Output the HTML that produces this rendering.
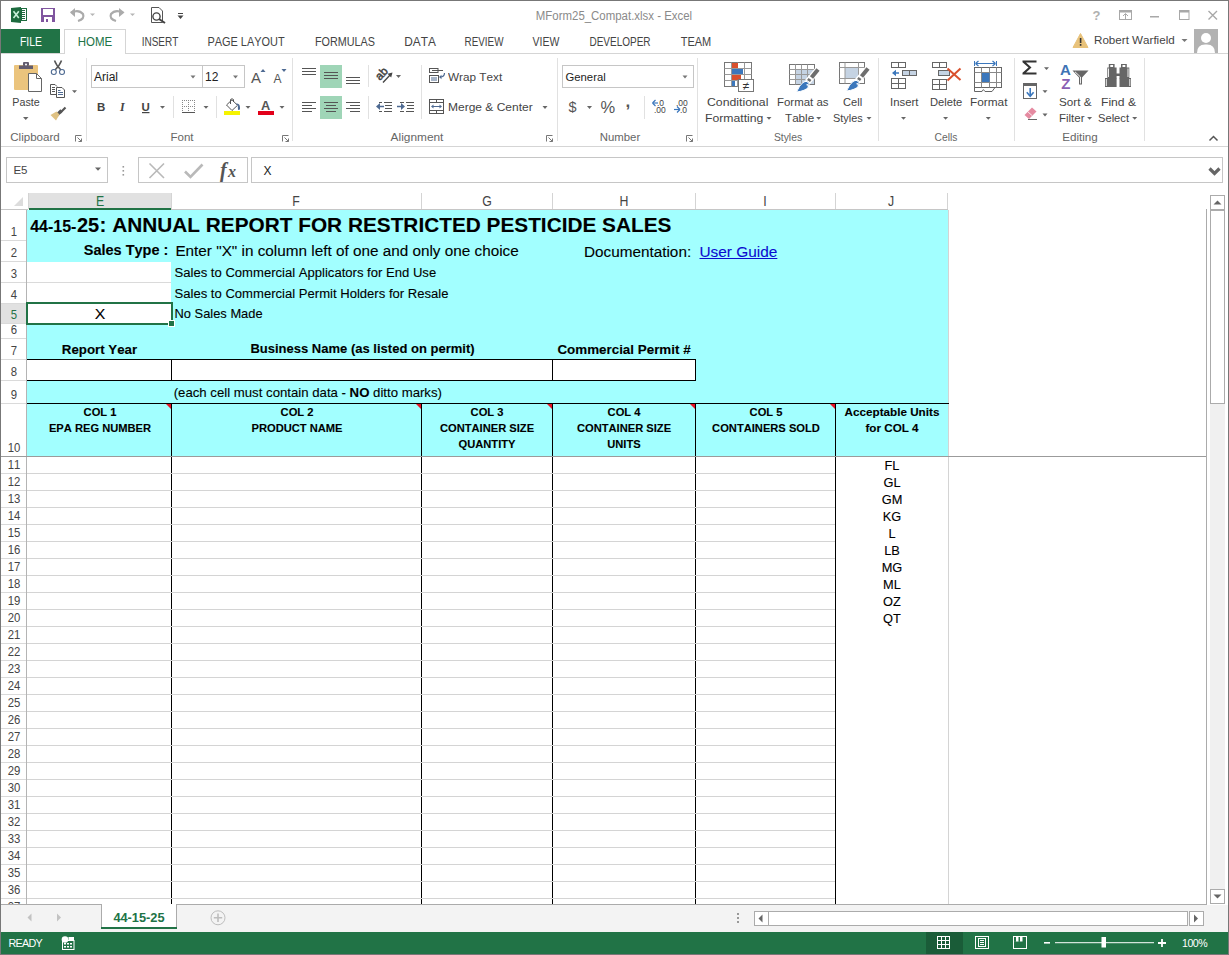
<!DOCTYPE html>
<html><head><meta charset="utf-8"><style>
html,body{margin:0;padding:0;}
body{width:1229px;height:955px;position:relative;overflow:hidden;background:#fff;font-family:"Liberation Sans",sans-serif;}
.t{position:absolute;white-space:nowrap;line-height:1;font-kerning:none;}
.r{position:absolute;}
#frame{position:absolute;left:0;top:0;width:1229px;height:955px;box-sizing:border-box;border:1px solid #777;z-index:100;pointer-events:none;}
</style></head><body>
<div class="t" style="left:213.5px;width:800px;text-align:center;top:10.39px;font-size:12px;color:#8a8a8a;transform:scaleX(0.9528);transform-origin:50% 0;">MForm25_Compat.xlsx - Excel</div>
<div class="r" style="left:1px;top:29px;width:59px;height:25px;background:#217346;"></div>
<div class="t" style="left:-369.5px;width:800px;text-align:center;top:36.05px;font-size:12.4px;color:#fff;transform:scaleX(0.8401);transform-origin:50% 0;">FILE</div>
<div class="r" style="left:64px;top:29px;width:62px;height:25px;background:#fff;border:1px solid #d5d5d5;border-bottom:none;box-sizing:border-box;"></div>
<div class="t" style="left:-305px;width:800px;text-align:center;top:36.05px;font-size:12.4px;color:#217346;transform:scaleX(0.9274);transform-origin:50% 0;">HOME</div>
<div class="t" style="left:-240.25px;width:800px;text-align:center;top:36.05px;font-size:12.4px;color:#444;transform:scaleX(0.8067);transform-origin:50% 0;">INSERT</div>
<div class="t" style="left:-153.8px;width:800px;text-align:center;top:36.05px;font-size:12.4px;color:#444;transform:scaleX(0.8824);transform-origin:50% 0;">PAGE LAYOUT</div>
<div class="t" style="left:-55.44999999999999px;width:800px;text-align:center;top:36.05px;font-size:12.4px;color:#444;transform:scaleX(0.8723);transform-origin:50% 0;">FORMULAS</div>
<div class="t" style="left:19.649999999999977px;width:800px;text-align:center;top:36.05px;font-size:12.4px;color:#444;transform:scaleX(0.9574);transform-origin:50% 0;">DATA</div>
<div class="t" style="left:84.10000000000002px;width:800px;text-align:center;top:36.05px;font-size:12.4px;color:#444;transform:scaleX(0.7973);transform-origin:50% 0;">REVIEW</div>
<div class="t" style="left:146.20000000000005px;width:800px;text-align:center;top:36.05px;font-size:12.4px;color:#444;transform:scaleX(0.8457);transform-origin:50% 0;">VIEW</div>
<div class="t" style="left:220.20000000000005px;width:800px;text-align:center;top:36.05px;font-size:12.4px;color:#444;transform:scaleX(0.8073);transform-origin:50% 0;">DEVELOPER</div>
<div class="t" style="left:295.95000000000005px;width:800px;text-align:center;top:36.05px;font-size:12.4px;color:#444;transform:scaleX(0.8854);transform-origin:50% 0;">TEAM</div>
<div class="r" style="left:1px;top:53px;width:63px;height:1px;background:#d5d5d5;"></div>
<div class="r" style="left:126px;top:53px;width:1102px;height:1px;background:#d5d5d5;"></div>
<div class="r" style="left:1px;top:146px;width:1227px;height:1px;background:#d5d5d5;"></div>
<div class="t" style="left:1093.7px;top:34.96px;font-size:11.8px;color:#444;transform:scaleX(0.9848);transform-origin:0 0;">Robert Warfield</div>
<div class="t" style="left:-364.75px;width:800px;text-align:center;top:132.26px;font-size:11.8px;color:#666;transform:scaleX(0.9800);transform-origin:50% 0;">Clipboard</div>
<div class="t" style="left:-218.05px;width:800px;text-align:center;top:132.26px;font-size:11.8px;color:#666;transform:scaleX(0.9783);transform-origin:50% 0;">Font</div>
<div class="t" style="left:17.399999999999977px;width:800px;text-align:center;top:132.26px;font-size:11.8px;color:#666;transform:scaleX(1.0062);transform-origin:50% 0;">Alignment</div>
<div class="t" style="left:219.75px;width:800px;text-align:center;top:132.26px;font-size:11.8px;color:#666;transform:scaleX(0.9650);transform-origin:50% 0;">Number</div>
<div class="t" style="left:387.6px;width:800px;text-align:center;top:132.26px;font-size:11.8px;color:#666;transform:scaleX(0.8776);transform-origin:50% 0;">Styles</div>
<div class="t" style="left:546.2px;width:800px;text-align:center;top:132.26px;font-size:11.8px;color:#666;transform:scaleX(0.8693);transform-origin:50% 0;">Cells</div>
<div class="t" style="left:679.5px;width:800px;text-align:center;top:132.26px;font-size:11.8px;color:#666;transform:scaleX(0.9867);transform-origin:50% 0;">Editing</div>
<div class="r" style="left:86px;top:58px;width:1px;height:83px;background:#e1e1e1;"></div>
<div class="r" style="left:292px;top:58px;width:1px;height:83px;background:#e1e1e1;"></div>
<div class="r" style="left:557px;top:58px;width:1px;height:83px;background:#e1e1e1;"></div>
<div class="r" style="left:697px;top:58px;width:1px;height:83px;background:#e1e1e1;"></div>
<div class="r" style="left:878px;top:58px;width:1px;height:83px;background:#e1e1e1;"></div>
<div class="r" style="left:1014px;top:58px;width:1px;height:83px;background:#e1e1e1;"></div>
<div class="r" style="left:1144px;top:58px;width:1px;height:83px;background:#e1e1e1;"></div>
<div class="t" style="left:-373.6px;width:800px;text-align:center;top:96.96px;font-size:11.8px;color:#444;transform:scaleX(0.9080);transform-origin:50% 0;">Paste</div>
<div class="t" style="left:448px;top:71.66px;font-size:11.8px;color:#444;transform:scaleX(0.9965);transform-origin:0 0;">Wrap Text</div>
<div class="t" style="left:448px;top:102.26px;font-size:11.8px;color:#444;transform:scaleX(1.0169);transform-origin:0 0;">Merge &amp; Center</div>
<div class="t" style="left:707px;top:97.06px;font-size:11.8px;color:#444;transform:scaleX(1.0399);transform-origin:0 0;">Conditional</div>
<div class="t" style="left:704.6px;top:113.06px;font-size:11.8px;color:#444;transform:scaleX(1.0355);transform-origin:0 0;">Formatting</div>
<div class="t" style="left:776.5px;top:97.06px;font-size:11.8px;color:#444;transform:scaleX(0.9696);transform-origin:0 0;">Format as</div>
<div class="t" style="left:785.4px;top:113.06px;font-size:11.8px;color:#444;transform:scaleX(0.9890);transform-origin:0 0;">Table</div>
<div class="t" style="left:842.6px;top:97.06px;font-size:11.8px;color:#444;transform:scaleX(0.9396);transform-origin:0 0;">Cell</div>
<div class="t" style="left:833px;top:113.06px;font-size:11.8px;color:#444;transform:scaleX(0.9243);transform-origin:0 0;">Styles</div>
<div class="t" style="left:889.6px;top:97.06px;font-size:11.8px;color:#444;transform:scaleX(0.9623);transform-origin:0 0;">Insert</div>
<div class="t" style="left:929.7px;top:97.06px;font-size:11.8px;color:#444;transform:scaleX(0.9469);transform-origin:0 0;">Delete</div>
<div class="t" style="left:969.5px;top:97.06px;font-size:11.8px;color:#444;transform:scaleX(1.0034);transform-origin:0 0;">Format</div>
<div class="t" style="left:1058.5px;top:97.06px;font-size:11.8px;color:#444;transform:scaleX(0.9911);transform-origin:0 0;">Sort &amp;</div>
<div class="t" style="left:1058.5px;top:113.06px;font-size:11.8px;color:#444;transform:scaleX(0.9724);transform-origin:0 0;">Filter</div>
<div class="t" style="left:1100.5px;top:97.06px;font-size:11.8px;color:#444;transform:scaleX(1.0292);transform-origin:0 0;">Find &amp;</div>
<div class="t" style="left:1098px;top:113.06px;font-size:11.8px;color:#444;transform:scaleX(0.9452);transform-origin:0 0;">Select</div>
<div class="r" style="left:6px;top:157px;width:102px;height:26px;background:#fff;border:1px solid #c6c6c6;box-sizing:border-box;"></div>
<div class="t" style="left:13.4px;top:165.32px;font-size:11.5px;color:#444;">E5</div>
<div class="r" style="left:138px;top:157px;width:110px;height:26px;background:#fff;border:1px solid #c6c6c6;box-sizing:border-box;"></div>
<div class="r" style="left:251px;top:157px;width:972px;height:26px;background:#fff;border:1px solid #c6c6c6;box-sizing:border-box;"></div>
<div class="t" style="left:263.6px;top:165.09px;font-size:12px;color:#222;">X</div>
<div class="r" style="left:29px;top:193px;width:142px;height:15px;background:#e1e1e1;"></div>
<div class="r" style="left:29px;top:208px;width:142px;height:2px;background:#217346;"></div>
<div class="r" style="left:0px;top:209px;width:28px;height:1px;background:#c6c6c6;"></div>
<div class="r" style="left:171px;top:209px;width:777px;height:1px;background:#c6c6c6;"></div>
<div class="r" style="left:28px;top:193px;width:1px;height:16px;background:#d4d4d4;"></div>
<div class="r" style="left:171px;top:193px;width:1px;height:16px;background:#d4d4d4;"></div>
<div class="r" style="left:421px;top:193px;width:1px;height:16px;background:#d4d4d4;"></div>
<div class="r" style="left:552px;top:193px;width:1px;height:16px;background:#d4d4d4;"></div>
<div class="r" style="left:695px;top:193px;width:1px;height:16px;background:#d4d4d4;"></div>
<div class="r" style="left:835px;top:193px;width:1px;height:16px;background:#d4d4d4;"></div>
<div class="r" style="left:947px;top:193px;width:1px;height:16px;background:#d4d4d4;"></div>
<div class="t" style="left:-300.5px;width:800px;text-align:center;top:194.40px;font-size:14px;color:#217346;transform:scaleX(0.8800);transform-origin:50% 0;">E</div>
<div class="t" style="left:-104px;width:800px;text-align:center;top:194.40px;font-size:14px;color:#444;transform:scaleX(0.8800);transform-origin:50% 0;">F</div>
<div class="t" style="left:87px;width:800px;text-align:center;top:194.40px;font-size:14px;color:#444;transform:scaleX(0.8800);transform-origin:50% 0;">G</div>
<div class="t" style="left:224px;width:800px;text-align:center;top:194.40px;font-size:14px;color:#444;transform:scaleX(0.8800);transform-origin:50% 0;">H</div>
<div class="t" style="left:365px;width:800px;text-align:center;top:194.40px;font-size:14px;color:#444;transform:scaleX(0.8800);transform-origin:50% 0;">I</div>
<div class="t" style="left:491px;width:800px;text-align:center;top:194.40px;font-size:14px;color:#444;transform:scaleX(0.8800);transform-origin:50% 0;">J</div>
<div class="r" style="left:26px;top:210px;width:1px;height:694px;background:#b4b4b4;"></div>
<div class="r" style="left:1px;top:240px;width:25px;height:1px;background:#dadada;"></div>
<div class="t" style="left:-386px;width:800px;text-align:center;top:225.22px;font-size:13.5px;color:#444;transform:scaleX(0.8400);transform-origin:50% 0;">1</div>
<div class="r" style="left:1px;top:261px;width:25px;height:1px;background:#dadada;"></div>
<div class="t" style="left:-386px;width:800px;text-align:center;top:246.22px;font-size:13.5px;color:#444;transform:scaleX(0.8400);transform-origin:50% 0;">2</div>
<div class="r" style="left:1px;top:282px;width:25px;height:1px;background:#dadada;"></div>
<div class="t" style="left:-386px;width:800px;text-align:center;top:267.22px;font-size:13.5px;color:#444;transform:scaleX(0.8400);transform-origin:50% 0;">3</div>
<div class="r" style="left:1px;top:303px;width:25px;height:1px;background:#dadada;"></div>
<div class="t" style="left:-386px;width:800px;text-align:center;top:288.22px;font-size:13.5px;color:#444;transform:scaleX(0.8400);transform-origin:50% 0;">4</div>
<div class="r" style="left:1px;top:304px;width:25px;height:20px;background:#e1e1e1;"></div>
<div class="r" style="left:1px;top:323px;width:25px;height:1px;background:#dadada;"></div>
<div class="t" style="left:-386px;width:800px;text-align:center;top:308.22px;font-size:13.5px;color:#217346;transform:scaleX(0.8400);transform-origin:50% 0;">5</div>
<div class="r" style="left:1px;top:338px;width:25px;height:1px;background:#dadada;"></div>
<div class="t" style="left:-386px;width:800px;text-align:center;top:323.22px;font-size:13.5px;color:#444;transform:scaleX(0.8400);transform-origin:50% 0;">6</div>
<div class="r" style="left:1px;top:359px;width:25px;height:1px;background:#dadada;"></div>
<div class="t" style="left:-386px;width:800px;text-align:center;top:344.22px;font-size:13.5px;color:#444;transform:scaleX(0.8400);transform-origin:50% 0;">7</div>
<div class="r" style="left:1px;top:380px;width:25px;height:1px;background:#dadada;"></div>
<div class="t" style="left:-386px;width:800px;text-align:center;top:365.22px;font-size:13.5px;color:#444;transform:scaleX(0.8400);transform-origin:50% 0;">8</div>
<div class="r" style="left:1px;top:403px;width:25px;height:1px;background:#dadada;"></div>
<div class="t" style="left:-386px;width:800px;text-align:center;top:388.22px;font-size:13.5px;color:#444;transform:scaleX(0.8400);transform-origin:50% 0;">9</div>
<div class="r" style="left:1px;top:456px;width:25px;height:1px;background:#dadada;"></div>
<div class="t" style="left:-386px;width:800px;text-align:center;top:441.22px;font-size:13.5px;color:#444;transform:scaleX(0.8400);transform-origin:50% 0;">10</div>
<div class="r" style="left:1px;top:473px;width:25px;height:1px;background:#dadada;"></div>
<div class="t" style="left:-386px;width:800px;text-align:center;top:458.22px;font-size:13.5px;color:#444;transform:scaleX(0.8400);transform-origin:50% 0;">11</div>
<div class="r" style="left:1px;top:490px;width:25px;height:1px;background:#dadada;"></div>
<div class="t" style="left:-386px;width:800px;text-align:center;top:475.22px;font-size:13.5px;color:#444;transform:scaleX(0.8400);transform-origin:50% 0;">12</div>
<div class="r" style="left:1px;top:507px;width:25px;height:1px;background:#dadada;"></div>
<div class="t" style="left:-386px;width:800px;text-align:center;top:492.22px;font-size:13.5px;color:#444;transform:scaleX(0.8400);transform-origin:50% 0;">13</div>
<div class="r" style="left:1px;top:524px;width:25px;height:1px;background:#dadada;"></div>
<div class="t" style="left:-386px;width:800px;text-align:center;top:509.22px;font-size:13.5px;color:#444;transform:scaleX(0.8400);transform-origin:50% 0;">14</div>
<div class="r" style="left:1px;top:541px;width:25px;height:1px;background:#dadada;"></div>
<div class="t" style="left:-386px;width:800px;text-align:center;top:526.22px;font-size:13.5px;color:#444;transform:scaleX(0.8400);transform-origin:50% 0;">15</div>
<div class="r" style="left:1px;top:558px;width:25px;height:1px;background:#dadada;"></div>
<div class="t" style="left:-386px;width:800px;text-align:center;top:543.22px;font-size:13.5px;color:#444;transform:scaleX(0.8400);transform-origin:50% 0;">16</div>
<div class="r" style="left:1px;top:575px;width:25px;height:1px;background:#dadada;"></div>
<div class="t" style="left:-386px;width:800px;text-align:center;top:560.22px;font-size:13.5px;color:#444;transform:scaleX(0.8400);transform-origin:50% 0;">17</div>
<div class="r" style="left:1px;top:592px;width:25px;height:1px;background:#dadada;"></div>
<div class="t" style="left:-386px;width:800px;text-align:center;top:577.22px;font-size:13.5px;color:#444;transform:scaleX(0.8400);transform-origin:50% 0;">18</div>
<div class="r" style="left:1px;top:609px;width:25px;height:1px;background:#dadada;"></div>
<div class="t" style="left:-386px;width:800px;text-align:center;top:594.22px;font-size:13.5px;color:#444;transform:scaleX(0.8400);transform-origin:50% 0;">19</div>
<div class="r" style="left:1px;top:626px;width:25px;height:1px;background:#dadada;"></div>
<div class="t" style="left:-386px;width:800px;text-align:center;top:611.22px;font-size:13.5px;color:#444;transform:scaleX(0.8400);transform-origin:50% 0;">20</div>
<div class="r" style="left:1px;top:643px;width:25px;height:1px;background:#dadada;"></div>
<div class="t" style="left:-386px;width:800px;text-align:center;top:628.22px;font-size:13.5px;color:#444;transform:scaleX(0.8400);transform-origin:50% 0;">21</div>
<div class="r" style="left:1px;top:660px;width:25px;height:1px;background:#dadada;"></div>
<div class="t" style="left:-386px;width:800px;text-align:center;top:645.22px;font-size:13.5px;color:#444;transform:scaleX(0.8400);transform-origin:50% 0;">22</div>
<div class="r" style="left:1px;top:677px;width:25px;height:1px;background:#dadada;"></div>
<div class="t" style="left:-386px;width:800px;text-align:center;top:662.22px;font-size:13.5px;color:#444;transform:scaleX(0.8400);transform-origin:50% 0;">23</div>
<div class="r" style="left:1px;top:694px;width:25px;height:1px;background:#dadada;"></div>
<div class="t" style="left:-386px;width:800px;text-align:center;top:679.22px;font-size:13.5px;color:#444;transform:scaleX(0.8400);transform-origin:50% 0;">24</div>
<div class="r" style="left:1px;top:711px;width:25px;height:1px;background:#dadada;"></div>
<div class="t" style="left:-386px;width:800px;text-align:center;top:696.22px;font-size:13.5px;color:#444;transform:scaleX(0.8400);transform-origin:50% 0;">25</div>
<div class="r" style="left:1px;top:728px;width:25px;height:1px;background:#dadada;"></div>
<div class="t" style="left:-386px;width:800px;text-align:center;top:713.22px;font-size:13.5px;color:#444;transform:scaleX(0.8400);transform-origin:50% 0;">26</div>
<div class="r" style="left:1px;top:745px;width:25px;height:1px;background:#dadada;"></div>
<div class="t" style="left:-386px;width:800px;text-align:center;top:730.22px;font-size:13.5px;color:#444;transform:scaleX(0.8400);transform-origin:50% 0;">27</div>
<div class="r" style="left:1px;top:762px;width:25px;height:1px;background:#dadada;"></div>
<div class="t" style="left:-386px;width:800px;text-align:center;top:747.22px;font-size:13.5px;color:#444;transform:scaleX(0.8400);transform-origin:50% 0;">28</div>
<div class="r" style="left:1px;top:779px;width:25px;height:1px;background:#dadada;"></div>
<div class="t" style="left:-386px;width:800px;text-align:center;top:764.22px;font-size:13.5px;color:#444;transform:scaleX(0.8400);transform-origin:50% 0;">29</div>
<div class="r" style="left:1px;top:796px;width:25px;height:1px;background:#dadada;"></div>
<div class="t" style="left:-386px;width:800px;text-align:center;top:781.22px;font-size:13.5px;color:#444;transform:scaleX(0.8400);transform-origin:50% 0;">30</div>
<div class="r" style="left:1px;top:813px;width:25px;height:1px;background:#dadada;"></div>
<div class="t" style="left:-386px;width:800px;text-align:center;top:798.22px;font-size:13.5px;color:#444;transform:scaleX(0.8400);transform-origin:50% 0;">31</div>
<div class="r" style="left:1px;top:830px;width:25px;height:1px;background:#dadada;"></div>
<div class="t" style="left:-386px;width:800px;text-align:center;top:815.22px;font-size:13.5px;color:#444;transform:scaleX(0.8400);transform-origin:50% 0;">32</div>
<div class="r" style="left:1px;top:847px;width:25px;height:1px;background:#dadada;"></div>
<div class="t" style="left:-386px;width:800px;text-align:center;top:832.22px;font-size:13.5px;color:#444;transform:scaleX(0.8400);transform-origin:50% 0;">33</div>
<div class="r" style="left:1px;top:864px;width:25px;height:1px;background:#dadada;"></div>
<div class="t" style="left:-386px;width:800px;text-align:center;top:849.22px;font-size:13.5px;color:#444;transform:scaleX(0.8400);transform-origin:50% 0;">34</div>
<div class="r" style="left:1px;top:881px;width:25px;height:1px;background:#dadada;"></div>
<div class="t" style="left:-386px;width:800px;text-align:center;top:866.22px;font-size:13.5px;color:#444;transform:scaleX(0.8400);transform-origin:50% 0;">35</div>
<div class="r" style="left:1px;top:898px;width:25px;height:1px;background:#dadada;"></div>
<div class="t" style="left:-386px;width:800px;text-align:center;top:883.22px;font-size:13.5px;color:#444;transform:scaleX(0.8400);transform-origin:50% 0;">36</div>
<div class="r" style="left:1px;top:915px;width:25px;height:1px;background:#dadada;"></div>
<div class="t" style="left:-386px;width:800px;text-align:center;top:900.22px;font-size:13.5px;color:#444;transform:scaleX(0.8400);transform-origin:50% 0;">37</div>
<div class="r" style="left:27px;top:210px;width:921px;height:246px;background:#a2ffff;"></div>
<div class="r" style="left:27px;top:262px;width:144px;height:62px;background:#fff;"></div>
<div class="r" style="left:27px;top:282px;width:144px;height:1px;background:#dadada;"></div>
<div class="r" style="left:27px;top:360px;width:668px;height:20px;background:#fff;"></div>
<div class="r" style="left:948px;top:210px;width:1px;height:694px;background:#d4d4d4;"></div>
<div class="r" style="left:27px;top:359px;width:669px;height:1px;background:#000;"></div>
<div class="r" style="left:27px;top:380px;width:669px;height:1px;background:#000;"></div>
<div class="r" style="left:171px;top:359px;width:1px;height:22px;background:#000;"></div>
<div class="r" style="left:552px;top:359px;width:1px;height:22px;background:#000;"></div>
<div class="r" style="left:695px;top:359px;width:1px;height:22px;background:#000;"></div>
<div class="r" style="left:27px;top:403px;width:922px;height:1px;background:#000;"></div>
<div class="r" style="left:171px;top:403px;width:1px;height:501px;background:#000;"></div>
<div class="r" style="left:421px;top:403px;width:1px;height:501px;background:#000;"></div>
<div class="r" style="left:552px;top:403px;width:1px;height:501px;background:#000;"></div>
<div class="r" style="left:695px;top:403px;width:1px;height:501px;background:#000;"></div>
<div class="r" style="left:835px;top:403px;width:1px;height:501px;background:#000;"></div>
<div class="r" style="left:1px;top:456px;width:1206px;height:1px;background:#9b9b9b;"></div>
<div class="r" style="left:27px;top:473px;width:808px;height:1px;background:#d4d4d4;"></div>
<div class="r" style="left:27px;top:490px;width:808px;height:1px;background:#d4d4d4;"></div>
<div class="r" style="left:27px;top:507px;width:808px;height:1px;background:#d4d4d4;"></div>
<div class="r" style="left:27px;top:524px;width:808px;height:1px;background:#d4d4d4;"></div>
<div class="r" style="left:27px;top:541px;width:808px;height:1px;background:#d4d4d4;"></div>
<div class="r" style="left:27px;top:558px;width:808px;height:1px;background:#d4d4d4;"></div>
<div class="r" style="left:27px;top:575px;width:808px;height:1px;background:#d4d4d4;"></div>
<div class="r" style="left:27px;top:592px;width:808px;height:1px;background:#d4d4d4;"></div>
<div class="r" style="left:27px;top:609px;width:808px;height:1px;background:#d4d4d4;"></div>
<div class="r" style="left:27px;top:626px;width:808px;height:1px;background:#d4d4d4;"></div>
<div class="r" style="left:27px;top:643px;width:808px;height:1px;background:#d4d4d4;"></div>
<div class="r" style="left:27px;top:660px;width:808px;height:1px;background:#d4d4d4;"></div>
<div class="r" style="left:27px;top:677px;width:808px;height:1px;background:#d4d4d4;"></div>
<div class="r" style="left:27px;top:694px;width:808px;height:1px;background:#d4d4d4;"></div>
<div class="r" style="left:27px;top:711px;width:808px;height:1px;background:#d4d4d4;"></div>
<div class="r" style="left:27px;top:728px;width:808px;height:1px;background:#d4d4d4;"></div>
<div class="r" style="left:27px;top:745px;width:808px;height:1px;background:#d4d4d4;"></div>
<div class="r" style="left:27px;top:762px;width:808px;height:1px;background:#d4d4d4;"></div>
<div class="r" style="left:27px;top:779px;width:808px;height:1px;background:#d4d4d4;"></div>
<div class="r" style="left:27px;top:796px;width:808px;height:1px;background:#d4d4d4;"></div>
<div class="r" style="left:27px;top:813px;width:808px;height:1px;background:#d4d4d4;"></div>
<div class="r" style="left:27px;top:830px;width:808px;height:1px;background:#d4d4d4;"></div>
<div class="r" style="left:27px;top:847px;width:808px;height:1px;background:#d4d4d4;"></div>
<div class="r" style="left:27px;top:864px;width:808px;height:1px;background:#d4d4d4;"></div>
<div class="r" style="left:27px;top:881px;width:808px;height:1px;background:#d4d4d4;"></div>
<div class="r" style="left:27px;top:898px;width:808px;height:1px;background:#d4d4d4;"></div>
<svg class="r" style="left:166px;top:404px;" width="5" height="5" viewBox="0 0 5 5"><polygon points="0,0 5,0 5,5" fill="#e81123"/></svg>
<svg class="r" style="left:416px;top:404px;" width="5" height="5" viewBox="0 0 5 5"><polygon points="0,0 5,0 5,5" fill="#e81123"/></svg>
<svg class="r" style="left:547px;top:404px;" width="5" height="5" viewBox="0 0 5 5"><polygon points="0,0 5,0 5,5" fill="#e81123"/></svg>
<svg class="r" style="left:690px;top:404px;" width="5" height="5" viewBox="0 0 5 5"><polygon points="0,0 5,0 5,5" fill="#e81123"/></svg>
<svg class="r" style="left:830px;top:404px;" width="5" height="5" viewBox="0 0 5 5"><polygon points="0,0 5,0 5,5" fill="#e81123"/></svg>
<div class="r" style="left:26px;top:302px;width:147px;height:23px;background:transparent;border:2px solid #217346;box-sizing:border-box;"></div>
<div class="r" style="left:169px;top:321px;width:5px;height:5px;background:#217346;outline:1px solid #fff;"></div>
<div class="t" style="left:30.2px;top:218.71px;font-size:16px;font-weight:bold;color:#000;-webkit-text-stroke:0.1px #000;">44-15-</div>
<div class="t" style="left:77px;top:215.32px;font-size:20px;font-weight:bold;color:#000;-webkit-text-stroke:0.1px #000;">25</div>
<div class="t" style="left:99.5px;top:214.64px;font-size:20.8px;font-weight:bold;color:#000;-webkit-text-stroke:0.1px #000;">: ANNUAL REPORT FOR RESTRICTED PESTICIDE SALES</div>
<div class="t" style="right:1060.6px;text-align:right;top:243.28px;font-size:14.5px;font-weight:bold;color:#000;-webkit-text-stroke:0.1px #000;">Sales Type :</div>
<div class="t" style="left:175.4px;top:242.80px;font-size:15.3px;color:#000;-webkit-text-stroke:0.1px #000;">Enter "X" in column left of one and only one choice</div>
<div class="t" style="left:584px;top:244.30px;font-size:15.3px;color:#000;-webkit-text-stroke:0.1px #000;">Documentation:</div>
<div class="t" style="left:699.5px;top:244.21px;font-size:15.4px;color:#0b0bd0;-webkit-text-stroke:0.1px #0b0bd0;"><u>User Guide</u></div>
<div class="t" style="left:174.5px;top:266.18px;font-size:13.08px;color:#000;-webkit-text-stroke:0.1px #000;">Sales to Commercial Applicators for End Use</div>
<div class="t" style="left:174.5px;top:287.18px;font-size:13.08px;color:#000;-webkit-text-stroke:0.1px #000;">Sales to Commercial Permit Holders for Resale</div>
<div class="t" style="left:174.5px;top:307.93px;font-size:12.9px;color:#000;-webkit-text-stroke:0.1px #000;">No Sales Made</div>
<div class="t" style="left:-300.4px;width:800px;text-align:center;top:307.32px;font-size:14.8px;color:#000;transform:scaleX(1.0700);transform-origin:50% 0;-webkit-text-stroke:0.1px #000;">X</div>
<div class="t" style="left:-300.5px;width:800px;text-align:center;top:343.19px;font-size:13.3px;font-weight:bold;color:#000;-webkit-text-stroke:0.1px #000;">Report Year</div>
<div class="t" style="left:-37.5px;width:800px;text-align:center;top:342.32px;font-size:13.03px;font-weight:bold;color:#000;-webkit-text-stroke:0.1px #000;">Business Name (as listed on permit)</div>
<div class="t" style="left:224px;width:800px;text-align:center;top:342.81px;font-size:13.4px;font-weight:bold;color:#000;-webkit-text-stroke:0.1px #000;">Commercial Permit #</div>
<div class="t" style="left:173.7px;top:385.68px;font-size:13.2px;color:#000;-webkit-text-stroke:0.1px #000;">(each cell must contain data - <b>NO</b> ditto marks)</div>
<div class="t" style="left:-300.5px;width:800px;text-align:center;top:406.96px;font-size:11.8px;font-weight:bold;color:#000;transform:scaleX(0.9450);transform-origin:50% 0;-webkit-text-stroke:0.1px #000;">COL 1</div>
<div class="t" style="left:-300.5px;width:800px;text-align:center;top:422.96px;font-size:11.8px;font-weight:bold;color:#000;transform:scaleX(0.9450);transform-origin:50% 0;-webkit-text-stroke:0.1px #000;">EPA REG NUMBER</div>
<div class="t" style="left:-103.5px;width:800px;text-align:center;top:406.96px;font-size:11.8px;font-weight:bold;color:#000;transform:scaleX(0.9450);transform-origin:50% 0;-webkit-text-stroke:0.1px #000;">COL 2</div>
<div class="t" style="left:-103.5px;width:800px;text-align:center;top:422.96px;font-size:11.8px;font-weight:bold;color:#000;transform:scaleX(0.9450);transform-origin:50% 0;-webkit-text-stroke:0.1px #000;">PRODUCT NAME</div>
<div class="t" style="left:87px;width:800px;text-align:center;top:406.96px;font-size:11.8px;font-weight:bold;color:#000;transform:scaleX(0.9450);transform-origin:50% 0;-webkit-text-stroke:0.1px #000;">COL 3</div>
<div class="t" style="left:87px;width:800px;text-align:center;top:422.96px;font-size:11.8px;font-weight:bold;color:#000;transform:scaleX(0.9450);transform-origin:50% 0;-webkit-text-stroke:0.1px #000;">CONTAINER SIZE</div>
<div class="t" style="left:87px;width:800px;text-align:center;top:438.96px;font-size:11.8px;font-weight:bold;color:#000;transform:scaleX(0.9450);transform-origin:50% 0;-webkit-text-stroke:0.1px #000;">QUANTITY</div>
<div class="t" style="left:224px;width:800px;text-align:center;top:406.96px;font-size:11.8px;font-weight:bold;color:#000;transform:scaleX(0.9450);transform-origin:50% 0;-webkit-text-stroke:0.1px #000;">COL 4</div>
<div class="t" style="left:224px;width:800px;text-align:center;top:422.96px;font-size:11.8px;font-weight:bold;color:#000;transform:scaleX(0.9450);transform-origin:50% 0;-webkit-text-stroke:0.1px #000;">CONTAINER SIZE</div>
<div class="t" style="left:224px;width:800px;text-align:center;top:438.96px;font-size:11.8px;font-weight:bold;color:#000;transform:scaleX(0.9450);transform-origin:50% 0;-webkit-text-stroke:0.1px #000;">UNITS</div>
<div class="t" style="left:365.5px;width:800px;text-align:center;top:406.96px;font-size:11.8px;font-weight:bold;color:#000;transform:scaleX(0.9450);transform-origin:50% 0;-webkit-text-stroke:0.1px #000;">COL 5</div>
<div class="t" style="left:365.5px;width:800px;text-align:center;top:422.96px;font-size:11.8px;font-weight:bold;color:#000;transform:scaleX(0.9450);transform-origin:50% 0;-webkit-text-stroke:0.1px #000;">CONTAINERS SOLD</div>
<div class="t" style="left:491.5px;width:800px;text-align:center;top:406.96px;font-size:11.8px;font-weight:bold;color:#000;transform:scaleX(0.9900);transform-origin:50% 0;-webkit-text-stroke:0.1px #000;">Acceptable Units</div>
<div class="t" style="left:491.5px;width:800px;text-align:center;top:422.96px;font-size:11.8px;font-weight:bold;color:#000;transform:scaleX(0.9900);transform-origin:50% 0;-webkit-text-stroke:0.1px #000;">for COL 4</div>
<div class="t" style="left:492px;width:800px;text-align:center;top:460.11px;font-size:12.8px;color:#000;-webkit-text-stroke:0.1px #000;">FL</div>
<div class="t" style="left:492px;width:800px;text-align:center;top:477.11px;font-size:12.8px;color:#000;-webkit-text-stroke:0.1px #000;">GL</div>
<div class="t" style="left:492px;width:800px;text-align:center;top:494.11px;font-size:12.8px;color:#000;-webkit-text-stroke:0.1px #000;">GM</div>
<div class="t" style="left:492px;width:800px;text-align:center;top:511.11px;font-size:12.8px;color:#000;-webkit-text-stroke:0.1px #000;">KG</div>
<div class="t" style="left:492px;width:800px;text-align:center;top:528.11px;font-size:12.8px;color:#000;-webkit-text-stroke:0.1px #000;">L</div>
<div class="t" style="left:492px;width:800px;text-align:center;top:545.11px;font-size:12.8px;color:#000;-webkit-text-stroke:0.1px #000;">LB</div>
<div class="t" style="left:492px;width:800px;text-align:center;top:562.11px;font-size:12.8px;color:#000;-webkit-text-stroke:0.1px #000;">MG</div>
<div class="t" style="left:492px;width:800px;text-align:center;top:579.11px;font-size:12.8px;color:#000;-webkit-text-stroke:0.1px #000;">ML</div>
<div class="t" style="left:492px;width:800px;text-align:center;top:596.11px;font-size:12.8px;color:#000;-webkit-text-stroke:0.1px #000;">OZ</div>
<div class="t" style="left:492px;width:800px;text-align:center;top:613.11px;font-size:12.8px;color:#000;-webkit-text-stroke:0.1px #000;">QT</div>
<div class="r" style="left:1210px;top:404px;width:15px;height:485px;background:#f0f0f0;"></div>
<div class="r" style="left:1206px;top:209px;width:1px;height:695px;background:#ababab;"></div>
<div class="r" style="left:1210px;top:195px;width:15px;height:15px;background:#fff;border:1px solid #ababab;box-sizing:border-box;"></div>
<div class="r" style="left:1210px;top:210px;width:15px;height:194px;background:#fff;border:1px solid #ababab;box-sizing:border-box;"></div>
<div class="r" style="left:1210px;top:889px;width:15px;height:15px;background:#fff;border:1px solid #ababab;box-sizing:border-box;"></div>
<div class="r" style="left:1px;top:904px;width:1206px;height:1px;background:#ababab;"></div>
<div class="r" style="left:1px;top:905px;width:1227px;height:27px;background:#f3f3f3;"></div>
<div class="r" style="left:101px;top:904px;width:76px;height:25px;background:#fff;border-left:1px solid #ababab;border-right:1px solid #ababab;box-sizing:border-box;"></div>
<div class="r" style="left:101px;top:927px;width:76px;height:2px;background:#217346;"></div>
<div class="t" style="left:-261px;width:800px;text-align:center;top:911.51px;font-size:12.8px;font-weight:bold;color:#217346;">44-15-25</div>
<div class="r" style="left:754px;top:911px;width:15px;height:15px;background:#fff;border:1px solid #ababab;box-sizing:border-box;"></div>
<div class="r" style="left:768px;top:911px;width:420px;height:15px;background:#fff;border:1px solid #ababab;box-sizing:border-box;"></div>
<div class="r" style="left:1189px;top:911px;width:15px;height:15px;background:#fff;border:1px solid #ababab;box-sizing:border-box;"></div>
<div class="r" style="left:1px;top:932px;width:1227px;height:22px;background:#217346;"></div>
<div class="r" style="left:926px;top:932px;width:37px;height:22px;background:#1a5c38;"></div>
<div class="t" style="left:8.5px;top:937.91px;font-size:10.8px;color:#fff;letter-spacing:-0.75px;">READY</div>
<div class="t" style="left:1181.9px;top:938.28px;font-size:10.6px;color:#fff;letter-spacing:-0.4px;">100%</div><svg class="r" style="left:0;top:0;z-index:50" width="1229" height="955"><path d="M11,8 L21,7 L21,23 L11,22 Z" fill="#1d6b3e"/><rect x="21.5" y="8.5" width="5" height="12" fill="#fff" stroke="#1d6b3e" stroke-width="1"/><rect x="22" y="10" width="3" height="1" fill="#1d6b3e"/><rect x="22" y="12" width="3" height="1" fill="#1d6b3e"/><rect x="22" y="14" width="3" height="1" fill="#1d6b3e"/><rect x="22" y="16" width="3" height="1" fill="#1d6b3e"/><rect x="22" y="18" width="3" height="1" fill="#1d6b3e"/><path d="M13.5,11.3 L18.8,18.1 M18.8,11.3 L13.5,18.1" stroke="#c9f1d9" stroke-width="1.6"/><rect x="41" y="8" width="14" height="14" fill="#80559f"/><rect x="43" y="9" width="10" height="6" fill="#fff"/><rect x="44" y="17" width="8" height="5" fill="#fff"/><rect x="46" y="19" width="2" height="3" fill="#80559f"/><path d="M71,12.5 Q79,9 83,14 Q85,19 78,21" fill="none" stroke="#ababab" stroke-width="2.2"/><path d="M70,12.5 L75,8 L75,17 Z" fill="#ababab"/><path d="M90,13.5 L95,13.5 L92.5,16 Z" fill="#b5b5b5"/><path d="M123,12.5 Q115,9 111,14 Q109,19 116,21" fill="none" stroke="#ababab" stroke-width="2.2"/><path d="M124.5,12.5 L119,8 L119,17 Z" fill="#ababab"/><path d="M130,13.5 L135,13.5 L132.5,16 Z" fill="#b5b5b5"/><path d="M151.5,7.5 L159,7.5 L162.5,11 L162.5,22.5 L151.5,22.5 Z" fill="#fff" stroke="#555" stroke-width="1"/><circle cx="156.5" cy="16.5" r="3.6" fill="none" stroke="#444" stroke-width="1.4"/><path d="M159,19 L165,23" stroke="#444" stroke-width="2"/><rect x="178" y="13" width="5" height="1" fill="#444"/><path d="M177.5,15.5 L183.5,15.5 L180.5,19 Z" fill="#444"/><text x="1096.5" y="20" font-family="Liberation Sans" font-size="13" font-weight="bold" fill="#b0b0b0" text-anchor="middle">?</text><rect x="1119.5" y="10.5" width="12" height="9" fill="none" stroke="#a8a8a8" stroke-width="1"/><rect x="1119.5" y="10.5" width="12" height="2" fill="#a8a8a8"/><path d="M1125.5,19 L1125.5,14 M1123,16 L1125.5,13.5 L1128,16" fill="none" stroke="#a8a8a8" stroke-width="1"/><rect x="1150" y="16" width="9" height="1.5" fill="#a8a8a8"/><rect x="1179.5" y="10.5" width="9.5" height="9" fill="none" stroke="#a8a8a8" stroke-width="1"/><rect x="1179.5" y="10.5" width="9.5" height="2" fill="#a8a8a8"/><path d="M1208.5,11 L1217,19.5 M1217,11 L1208.5,19.5" stroke="#a8a8a8" stroke-width="1.4"/><path d="M1080.5,33.5 L1088,47.5 L1073,47.5 Z" fill="#e8c27a" stroke="#e8c27a" stroke-width="1" stroke-linejoin="round"/><rect x="1079.8" y="38" width="1.6" height="5" fill="#333"/><rect x="1079.8" y="44" width="1.6" height="1.8" fill="#333"/><path d="M1181.5,39 L1187.5,39 L1184.5,42 Z" fill="#777"/><rect x="1194" y="29" width="24" height="24" fill="#b2b2b2"/><circle cx="1206" cy="38" r="5" fill="#fff"/><path d="M1197,53 Q1197,44 1206,44.5 Q1215,44 1215,53 Z" fill="#fff"/><rect x="14" y="65" width="24" height="25" rx="1" fill="#ebc47d"/><rect x="19" y="65.5" width="14" height="3.5" fill="#625c6e"/><rect x="23" y="62" width="6" height="4" rx="1" fill="#625c6e"/><circle cx="26" cy="64.5" r="1" fill="#fff"/><path d="M28.5,73.5 L36.5,73.5 L41.5,78.5 L41.5,91.5 L28.5,91.5 Z" fill="#fff" stroke="#666" stroke-width="1"/><path d="M36.5,73.5 L36.5,78.5 L41.5,78.5" fill="none" stroke="#666" stroke-width="1"/><path d="M23,117 L28.5,117 L25.75,120 Z" fill="#666"/><path d="M54.5,60.5 Q56,65 61,70 M61.5,60.5 Q60,65 55,70" fill="none" stroke="#555" stroke-width="1.5"/><circle cx="53.8" cy="72" r="2.5" fill="none" stroke="#4e6a92" stroke-width="1.1"/><circle cx="62" cy="72" r="2.5" fill="none" stroke="#4e6a92" stroke-width="1.1"/><path d="M50.5,84.5 L55,84.5 L57,86.5 M50.5,84.5 L50.5,94.5 L56.5,94.5" fill="none" stroke="#555" stroke-width="1"/><rect x="52" y="87" width="3" height="1" fill="#555"/><rect x="52" y="89" width="3" height="1" fill="#555"/><rect x="52" y="91" width="3" height="1" fill="#555"/><path d="M56.5,87.5 L62,87.5 L64.5,90 L64.5,97.5 L56.5,97.5 Z" fill="#fff" stroke="#555" stroke-width="1"/><rect x="58" y="90" width="2.5" height="1" fill="#4e6a92"/><rect x="58" y="92" width="5" height="1" fill="#4e6a92"/><rect x="58" y="94" width="5" height="1" fill="#4e6a92"/><path d="M72,90.3 L77,90.3 L74.5,93 Z" fill="#666"/><path d="M65.5,107.5 L60,113" stroke="#555" stroke-width="2.2"/><path d="M61.5,110.5 L56,116" stroke="#555" stroke-width="3.2"/><path d="M56.5,111.5 L50.5,115 L56,120.5 L59.5,114.5 Z" fill="#e0c283"/><rect x="91.5" y="65.5" width="111" height="22" fill="#fff" stroke="#c6c6c6"/><rect x="202.5" y="65.5" width="42" height="22" fill="#fff" stroke="#c6c6c6"/><text x="94" y="81" font-family="Liberation Sans" font-size="12" fill="#222">Arial</text><text x="205" y="81" font-family="Liberation Sans" font-size="12" fill="#222">12</text><path d="M190.5,75.5 L195.5,75.5 L193,78.5 Z" fill="#777"/><path d="M233,75.5 L238,75.5 L235.5,78.5 Z" fill="#777"/><text x="251" y="83" font-family="Liberation Sans" font-size="15" fill="#555">A</text><path d="M260.5,72 L265.5,72 L263,69 Z" fill="#4e6a92"/><text x="273.5" y="83" font-family="Liberation Sans" font-size="12" fill="#555">A</text><path d="M281.5,69 L286.5,69 L284,72 Z" fill="#4e6a92"/><text x="97" y="110.6" font-family="Liberation Sans" font-size="11.5" font-weight="bold" fill="#444">B</text><text x="120" y="110.6" font-family="Liberation Serif" font-size="12" font-style="italic" font-weight="bold" fill="#444">I</text><text x="141.5" y="110.6" font-family="Liberation Sans" font-size="11.5" font-weight="bold" fill="#444">U</text><rect x="142" y="112" width="7.5" height="1.2" fill="#444"/><path d="M160,106 L165,106 L162.5,108.8 Z" fill="#666"/><rect x="173" y="96" width="1" height="22" fill="#e1e1e1"/><rect x="182" y="100" width="1" height="1" fill="#888"/><rect x="182" y="106" width="1" height="1" fill="#888"/><rect x="182" y="100" width="1" height="1" fill="#888"/><rect x="188" y="100" width="1" height="1" fill="#888"/><rect x="194" y="100" width="1" height="1" fill="#888"/><rect x="184" y="100" width="1" height="1" fill="#888"/><rect x="184" y="106" width="1" height="1" fill="#888"/><rect x="182" y="102" width="1" height="1" fill="#888"/><rect x="188" y="102" width="1" height="1" fill="#888"/><rect x="194" y="102" width="1" height="1" fill="#888"/><rect x="186" y="100" width="1" height="1" fill="#888"/><rect x="186" y="106" width="1" height="1" fill="#888"/><rect x="182" y="104" width="1" height="1" fill="#888"/><rect x="188" y="104" width="1" height="1" fill="#888"/><rect x="194" y="104" width="1" height="1" fill="#888"/><rect x="188" y="100" width="1" height="1" fill="#888"/><rect x="188" y="106" width="1" height="1" fill="#888"/><rect x="182" y="106" width="1" height="1" fill="#888"/><rect x="188" y="106" width="1" height="1" fill="#888"/><rect x="194" y="106" width="1" height="1" fill="#888"/><rect x="190" y="100" width="1" height="1" fill="#888"/><rect x="190" y="106" width="1" height="1" fill="#888"/><rect x="182" y="108" width="1" height="1" fill="#888"/><rect x="188" y="108" width="1" height="1" fill="#888"/><rect x="194" y="108" width="1" height="1" fill="#888"/><rect x="192" y="100" width="1" height="1" fill="#888"/><rect x="192" y="106" width="1" height="1" fill="#888"/><rect x="182" y="110" width="1" height="1" fill="#888"/><rect x="188" y="110" width="1" height="1" fill="#888"/><rect x="194" y="110" width="1" height="1" fill="#888"/><rect x="194" y="100" width="1" height="1" fill="#888"/><rect x="194" y="106" width="1" height="1" fill="#888"/><rect x="182" y="112" width="1" height="1" fill="#888"/><rect x="188" y="112" width="1" height="1" fill="#888"/><rect x="194" y="112" width="1" height="1" fill="#888"/><rect x="182" y="112" width="13" height="1" fill="#555"/><path d="M203.5,106 L208.5,106 L206,108.8 Z" fill="#666"/><rect x="216" y="96" width="1" height="22" fill="#e1e1e1"/><path d="M226.5,105 L232,99.8 L237.5,105.3 L232,110.5 Z" fill="#fff" stroke="#555" stroke-width="1"/><path d="M230.5,104 L230.5,99.5 Q232,98 233.5,99.5 L233.5,102" fill="none" stroke="#555" stroke-width="1"/><path d="M236,103.5 Q240.5,102.5 240,109.5 L238,110 L237.8,105.5 Z" fill="#4e6a92"/><rect x="224" y="111" width="16" height="4" fill="#f5f300"/><path d="M245.5,106 L250.5,106 L248,108.8 Z" fill="#666"/><text x="261" y="110.3" font-family="Liberation Sans" font-size="12.8" font-weight="bold" fill="#555">A</text><rect x="258" y="111" width="16" height="4" fill="#e2001a"/><path d="M279.5,106 L284.5,106 L282,108.8 Z" fill="#666"/><path d="M75.5,141.5 L75.5,135.5 L81.5,135.5" fill="none" stroke="#777" stroke-width="1"/><path d="M77.5,137.5 L81.5,141.5 M81.5,138.5 L81.5,141.5 L78.5,141.5" fill="none" stroke="#777" stroke-width="1"/><path d="M282.5,141.5 L282.5,135.5 L288.5,135.5" fill="none" stroke="#777" stroke-width="1"/><path d="M284.5,137.5 L288.5,141.5 M288.5,138.5 L288.5,141.5 L285.5,141.5" fill="none" stroke="#777" stroke-width="1"/><path d="M546.5,141.5 L546.5,135.5 L552.5,135.5" fill="none" stroke="#777" stroke-width="1"/><path d="M548.5,137.5 L552.5,141.5 M552.5,138.5 L552.5,141.5 L549.5,141.5" fill="none" stroke="#777" stroke-width="1"/><path d="M686.5,141.5 L686.5,135.5 L692.5,135.5" fill="none" stroke="#777" stroke-width="1"/><path d="M688.5,137.5 L692.5,141.5 M692.5,138.5 L692.5,141.5 L689.5,141.5" fill="none" stroke="#777" stroke-width="1"/><rect x="320" y="65" width="22" height="23" fill="#9fd5b7"/><rect x="320" y="96" width="22" height="23" fill="#9fd5b7"/><rect x="302" y="68" width="14" height="1" fill="#555"/><rect x="302" y="71" width="14" height="1" fill="#555"/><rect x="302" y="74" width="14" height="1" fill="#555"/><rect x="324" y="72" width="14" height="1" fill="#555"/><rect x="324" y="75" width="14" height="1" fill="#555"/><rect x="324" y="78" width="14" height="1" fill="#555"/><rect x="346" y="77" width="14" height="1" fill="#555"/><rect x="346" y="80" width="14" height="1" fill="#555"/><rect x="346" y="83" width="14" height="1" fill="#555"/><rect x="302" y="102" width="14" height="1" fill="#555"/><rect x="324" y="102" width="14" height="1" fill="#555"/><rect x="346" y="102" width="14" height="1" fill="#555"/><rect x="302" y="105" width="10" height="1" fill="#555"/><rect x="326" y="105" width="10" height="1" fill="#555"/><rect x="350" y="105" width="10" height="1" fill="#555"/><rect x="302" y="108" width="14" height="1" fill="#555"/><rect x="324" y="108" width="14" height="1" fill="#555"/><rect x="346" y="108" width="14" height="1" fill="#555"/><rect x="302" y="111" width="10" height="1" fill="#555"/><rect x="326" y="111" width="10" height="1" fill="#555"/><rect x="350" y="111" width="10" height="1" fill="#555"/><rect x="368" y="65" width="1" height="22" fill="#e1e1e1"/><rect x="368" y="96" width="1" height="23" fill="#e1e1e1"/><text x="0" y="0" font-family="Liberation Sans" font-size="11.5" fill="#444" stroke="#444" stroke-width="0.5" transform="translate(380,81) rotate(-47)">ab</text><path d="M383,82.5 L391,74" stroke="#444" stroke-width="1.3"/><path d="M392.5,72.5 L387.5,73.8 L391.2,77.5 Z" fill="#444"/><path d="M396,75 L401,75 L398.5,78 Z" fill="#666"/><rect x="379" y="102" width="3" height="1" fill="#555"/><rect x="384" y="102" width="8" height="1" fill="#555"/><rect x="400" y="102" width="4" height="1" fill="#555"/><rect x="406" y="102" width="8" height="1" fill="#555"/><rect x="379" y="111" width="3" height="1" fill="#555"/><rect x="384" y="111" width="8" height="1" fill="#555"/><rect x="400" y="111" width="4" height="1" fill="#555"/><rect x="406" y="111" width="8" height="1" fill="#555"/><rect x="385" y="105" width="7" height="1" fill="#555"/><rect x="407" y="105" width="7" height="1" fill="#555"/><rect x="385" y="108" width="7" height="1" fill="#555"/><rect x="407" y="108" width="7" height="1" fill="#555"/><path d="M376,106.5 L380,103 L380,105.8 L384,105.8 L384,107.2 L380,107.2 L380,110 Z" fill="#4e6a92"/><path d="M405,106.5 L401,103 L401,105.8 L397,105.8 L397,107.2 L401,107.2 L401,110 Z" fill="#4e6a92"/><rect x="421" y="65" width="1" height="54" fill="#e1e1e1"/><rect x="429.5" y="68.5" width="8.5" height="4" fill="none" stroke="#555" stroke-width="1"/><path d="M432,70.5 L443,70.5" stroke="#555" stroke-width="1"/><rect x="429.5" y="75.5" width="9" height="7" fill="#fff" stroke="#555" stroke-width="1"/><rect x="431" y="77.5" width="6" height="1" fill="#4e6a92"/><rect x="431" y="79.5" width="6" height="1" fill="#4e6a92"/><path d="M444.5,73 Q444.5,77 440,77" fill="none" stroke="#4e6a92" stroke-width="1.2"/><path d="M439,77 L441.5,74.8 L441.5,79.2 Z" fill="#4e6a92"/><rect x="429.5" y="99.5" width="14" height="14" fill="#fff" stroke="#555" stroke-width="1"/><path d="M429.5,102.5 L443.5,102.5 M429.5,110.5 L443.5,110.5 M436.5,99.5 L436.5,102.5 M436.5,110.5 L436.5,113.5" stroke="#555" stroke-width="1"/><path d="M432,106.5 L441,106.5" stroke="#4e6a92" stroke-width="1"/><path d="M431,106.5 L433.5,104.5 L433.5,108.5 Z M442,106.5 L439.5,104.5 L439.5,108.5 Z" fill="#4e6a92"/><path d="M542.5,106 L547.5,106 L545,109 Z" fill="#666"/><rect x="562.5" y="65.5" width="131" height="22" fill="#fff" stroke="#c6c6c6"/><text x="565.5" y="81" font-family="Liberation Sans" font-size="11.3" fill="#222">General</text><path d="M682.5,75.5 L687.5,75.5 L685,78.5 Z" fill="#777"/><text x="568.5" y="112" font-family="Liberation Sans" font-size="14.5" fill="#555">$</text><path d="M587,106 L592,106 L589.5,109 Z" fill="#666"/><text x="600.5" y="113.3" font-family="Liberation Sans" font-size="16.5" fill="#555">%</text><text x="625.5" y="106.5" font-family="Liberation Sans" font-size="17" font-weight="bold" fill="#555">,</text><rect x="644" y="96" width="1" height="23" fill="#e1e1e1"/><text x="657" y="106" font-family="Liberation Sans" font-size="8.5" fill="#444">.0</text><text x="654" y="113" font-family="Liberation Sans" font-size="8.5" fill="#444">.00</text><path d="M653,103 L658,103" stroke="#3b77bc" stroke-width="1.2"/><path d="M652.5,103 L655.5,100 M652.5,103 L655.5,106" stroke="#3b77bc" stroke-width="1.2" fill="none"/><text x="676" y="106" font-family="Liberation Sans" font-size="8.5" fill="#444">.00</text><text x="680" y="113" font-family="Liberation Sans" font-size="8.5" fill="#444">.0</text><path d="M674,109.5 L679.5,109.5" stroke="#3b77bc" stroke-width="1.2"/><path d="M680,109.5 L677,106.5 M680,109.5 L677,112.5" stroke="#3b77bc" stroke-width="1.2" fill="none"/><rect x="724.5" y="62.5" width="27" height="24" fill="#fff" stroke="#777" stroke-width="1"/><path d="M731.5,62.5 L731.5,86.5" stroke="#999" stroke-width="1"/><path d="M737.5,62.5 L737.5,86.5" stroke="#999" stroke-width="1"/><path d="M744.5,62.5 L744.5,86.5" stroke="#999" stroke-width="1"/><path d="M724.5,68.5 L751.5,68.5" stroke="#999" stroke-width="1"/><path d="M724.5,74.5 L751.5,74.5" stroke="#999" stroke-width="1"/><path d="M724.5,80.5 L751.5,80.5" stroke="#999" stroke-width="1"/><rect x="732" y="63" width="6" height="5" fill="#d9502d"/><rect x="732" y="69" width="11" height="5" fill="#3b77bc"/><rect x="732" y="75" width="9" height="5" fill="#d9502d"/><rect x="732" y="81" width="3" height="5" fill="#3b77bc"/><rect x="738.5" y="79.5" width="15" height="12" fill="#fff" stroke="#777" stroke-width="1"/><text x="746" y="89.5" font-family="Liberation Sans" font-size="12" fill="#333" text-anchor="middle">≠</text><rect x="795.5" y="69.5" width="19" height="15" fill="#c5d3e3"/><rect x="789.5" y="64.5" width="25" height="20" fill="none" stroke="#777" stroke-width="1"/><path d="M795.5,64.5 L795.5,84.5" stroke="#999" stroke-width="1"/><path d="M801.5,64.5 L801.5,84.5" stroke="#999" stroke-width="1"/><path d="M807.5,64.5 L807.5,84.5" stroke="#999" stroke-width="1"/><path d="M789.5,69.5 L814.5,69.5" stroke="#999" stroke-width="1"/><path d="M789.5,74.5 L814.5,74.5" stroke="#999" stroke-width="1"/><path d="M789.5,79.5 L814.5,79.5" stroke="#999" stroke-width="1"/><path d="M818.5,69 L807.5,82" stroke="#fff" stroke-width="6.5"/><path d="M818.0,69.5 L811.5,77.5" stroke="#6e6e6e" stroke-width="4"/><path d="M810.0,79 L808.5,81" stroke="#6e6e6e" stroke-width="3.6"/><path d="M807.0,81.5 Q810.5,83.5 808.5,87 Q805.5,91 796.5,92 Q799.5,85 803.0,82.5 Q805.0,81 807.0,81.5 Z" fill="#3b77bc" stroke="#fff" stroke-width="1"/><path d="M806.5,85 Q808.5,84 808.0,86.5" fill="none" stroke="#fff" stroke-width="1.2"/><rect x="845" y="68" width="13" height="10" fill="#c5d3e3"/><rect x="839.5" y="62.5" width="25" height="21" fill="none" stroke="#777" stroke-width="1"/><path d="M845,62.5 L845,83.5 M858.5,62.5 L858.5,83.5 M839.5,67.5 L864.5,67.5 M839.5,78.5 L864.5,78.5" stroke="#999" stroke-width="1"/><path d="M868.5,68 L857.5,81" stroke="#fff" stroke-width="6.5"/><path d="M868.0,68.5 L861.5,76.5" stroke="#6e6e6e" stroke-width="4"/><path d="M860.0,78 L858.5,80" stroke="#6e6e6e" stroke-width="3.6"/><path d="M857.0,80.5 Q860.5,82.5 858.5,86 Q855.5,90 846.5,91 Q849.5,84 853.0,81.5 Q855.0,80 857.0,80.5 Z" fill="#3b77bc" stroke="#fff" stroke-width="1"/><path d="M856.5,84 Q858.5,83 858.0,85.5" fill="none" stroke="#fff" stroke-width="1.2"/><rect x="891.5" y="62.5" width="14" height="5" fill="#fff" stroke="#666" stroke-width="1"/><path d="M898.5,62.5 L898.5,67.5" stroke="#666" stroke-width="1"/><rect x="902.5" y="70.5" width="14" height="5" fill="#c5d3e3" stroke="#666" stroke-width="1"/><path d="M909.5,70.5 L909.5,75.5" stroke="#666" stroke-width="1"/><path d="M892,73 L896,69.8 L896,72.2 L899,72.2 L899,73.8 L896,73.8 L896,76.2 Z" fill="#3b77bc"/><rect x="891.5" y="78.5" width="14" height="10" fill="#fff" stroke="#666" stroke-width="1"/><path d="M898.5,78.5 L898.5,88.5" stroke="#666" stroke-width="1"/><path d="M891.5,83.5 L905.5,83.5" stroke="#666" stroke-width="1"/><rect x="932.5" y="62.5" width="14" height="5" fill="#fff" stroke="#666" stroke-width="1"/><path d="M939.5,62.5 L939.5,67.5" stroke="#666" stroke-width="1"/><rect x="938.5" y="70.5" width="11" height="5" fill="#c5d3e3" stroke="#666" stroke-width="1"/><rect x="932.5" y="79.5" width="14" height="10" fill="#fff" stroke="#666" stroke-width="1"/><path d="M939.5,79.5 L939.5,89.5" stroke="#666" stroke-width="1"/><path d="M932.5,84.5 L946.5,84.5" stroke="#666" stroke-width="1"/><path d="M947.5,68.5 L960.5,80 M960.5,68.5 L947.5,80.5" stroke="#d9502d" stroke-width="2"/><path d="M974.5,61 L974.5,66 M996.5,61 L996.5,66 M976,63.5 L995,63.5" stroke="#3b77bc" stroke-width="1"/><path d="M975.5,63.5 L978.5,61 M975.5,63.5 L978.5,66 M995.5,63.5 L992.5,61 M995.5,63.5 L992.5,66" stroke="#3b77bc" stroke-width="1.2"/><rect x="974.5" y="67.5" width="27" height="20" fill="#fff" stroke="#666" stroke-width="1"/><path d="M981.5,67.5 L981.5,87.5" stroke="#888" stroke-width="1"/><path d="M989.5,67.5 L989.5,87.5" stroke="#888" stroke-width="1"/><path d="M996.5,67.5 L996.5,87.5" stroke="#888" stroke-width="1"/><path d="M974.5,72.5 L1001.5,72.5" stroke="#888" stroke-width="1"/><path d="M974.5,82.5 L1001.5,82.5" stroke="#888" stroke-width="1"/><rect x="982" y="73" width="7.5" height="9" fill="#3b77bc"/><path d="M974.5,87.5 L974.5,91.5 L982,91.5 Q983,88 985,91.5 L992,91.5 L995,87.5" fill="none" stroke="#666" stroke-width="1"/><path d="M1022.5,60.5 L1036.5,60.5 L1036.5,62.5 L1026,62.5 L1031.5,67.5 L1026,72.5 L1036.5,72.5 L1036.5,74.5 L1022.5,74.5 L1022.5,72.8 L1028.5,67.5 L1022.5,62.2 Z" fill="#333"/><path d="M1044,67.2 L1049,67.2 L1046.5,70 Z" fill="#666"/><rect x="1023.5" y="83.5" width="13" height="15" fill="#fff" stroke="#666" stroke-width="1"/><rect x="1023" y="83" width="14" height="3" fill="#666"/><path d="M1030.2,88 L1030.2,95" stroke="#3b77bc" stroke-width="1.6"/><path d="M1026.8,92.3 L1030.2,96.3 L1033.6,92.3" fill="none" stroke="#3b77bc" stroke-width="1.6"/><path d="M1042.5,90.2 L1047.5,90.2 L1045,93 Z" fill="#666"/><path d="M1032,107.5 L1036.5,111.5 L1029,119 L1024.5,115 Z" fill="#e58aa1"/><path d="M1027.5,111.5 L1032,115.5" stroke="#fff" stroke-width="0.8"/><path d="M1028,119.5 L1037,119.5" stroke="#666" stroke-width="1"/><path d="M1042.5,113.6 L1047.5,113.6 L1045,116.4 Z" fill="#666"/><text x="1065.5" y="74.6" font-family="Liberation Sans" font-size="15" font-weight="bold" fill="#3e73b5" text-anchor="middle">A</text><text x="1065.8" y="88.7" font-family="Liberation Sans" font-size="15" font-weight="bold" fill="#8b5fb3" text-anchor="middle">Z</text><path d="M1072.5,70.5 L1088.5,70.5 L1082,77.5 L1082,84.5 L1079,84.5 L1079,77.5 Z" fill="#666"/><path d="M1075,71.8 L1080.5,77 L1080.5,83.5" fill="none" stroke="#fff" stroke-width="0.9"/><rect x="1108.8" y="64" width="5.8" height="4" fill="#666"/><rect x="1110.3" y="65" width="2.8" height="2" fill="#fff"/><rect x="1107.3" y="67.5" width="9.299999999999955" height="11" fill="#666"/><rect x="1105" y="78" width="11.599999999999909" height="9" fill="#666"/><rect x="1121" y="64" width="5.8" height="4" fill="#666"/><rect x="1122.5" y="65" width="2.8" height="2" fill="#fff"/><rect x="1119.5" y="67.5" width="9.799999999999955" height="11" fill="#666"/><rect x="1119.5" y="78" width="11.5" height="9" fill="#666"/><rect x="1116" y="73.5" width="4" height="2.5" fill="#666"/><path d="M1106.3,79 L1106.3,86 M1129.8,79 L1129.8,86 M1108.5,68.5 L1108.5,77 M1128,68.5 L1128,77" stroke="#fff" stroke-width="0.9"/><path d="M1209.5,140.5 L1213.5,136.5 L1217.5,140.5" fill="none" stroke="#555" stroke-width="1.5"/><path d="M766.5,117 L771.5,117 L769,119.8 Z" fill="#666"/><path d="M816.2,117 L821.2,117 L818.7,119.8 Z" fill="#666"/><path d="M866.5,117 L871.5,117 L869,119.8 Z" fill="#666"/><path d="M901.0,117 L906.0,117 L903.5,119.8 Z" fill="#666"/><path d="M943.1,117 L948.1,117 L945.6,119.8 Z" fill="#666"/><path d="M985.8,117 L990.8,117 L988.3,119.8 Z" fill="#666"/><path d="M1087.1,117 L1092.1,117 L1089.6,119.8 Z" fill="#666"/><path d="M1132.2,117 L1137.2,117 L1134.7,119.8 Z" fill="#666"/><path d="M95,167.5 L101,167.5 L98,170.8 Z" fill="#666"/><rect x="122.5" y="166" width="1.6" height="1.6" fill="#999"/><rect x="122.5" y="170" width="1.6" height="1.6" fill="#999"/><rect x="122.5" y="174" width="1.6" height="1.6" fill="#999"/><path d="M149.5,163.5 L164,178 M164,163.5 L149.5,178" stroke="#b9b9b9" stroke-width="1.6"/><path d="M185,171.5 L190.5,177 L202.5,164.5" fill="none" stroke="#b9b9b9" stroke-width="2.6"/><text x="220" y="177" font-family="Liberation Serif" font-size="20" font-style="italic" font-weight="bold" fill="#555">f</text><text x="228" y="177" font-family="Liberation Serif" font-size="16" font-style="italic" font-weight="bold" fill="#555">x</text><path d="M1209.5,168.5 L1214.5,173.5 L1219.5,168.5" fill="none" stroke="#666" stroke-width="3.2"/><path d="M23,197 L23,206 L14,206 Z" fill="#dcdcdc"/><path d="M1213.5,204.5 L1217.5,200.5 L1221.5,204.5 Z" fill="#666"/><path d="M1213.5,894.5 L1217.5,898.5 L1221.5,894.5 Z" fill="#666"/><path d="M758.5,918.5 L762.5,914.5 L762.5,922.5 Z" fill="#666"/><path d="M1198,918.5 L1194,914.5 L1194,922.5 Z" fill="#666"/><rect x="737" y="913" width="2" height="2" fill="#999"/><rect x="737" y="917" width="2" height="2" fill="#999"/><rect x="737" y="921" width="2" height="2" fill="#999"/><path d="M27.5,917.5 L31.5,913.5 L31.5,921.5 Z" fill="#c2c2c2"/><path d="M61,917.5 L57,913.5 L57,921.5 Z" fill="#c2c2c2"/><circle cx="218" cy="917.8" r="7" fill="none" stroke="#bdbdbd" stroke-width="1"/><path d="M218,913.5 L218,922 M213.8,917.8 L222.2,917.8" stroke="#bdbdbd" stroke-width="1.6"/><circle cx="65" cy="939.5" r="3.3" fill="#fff"/><rect x="62.5" y="940.5" width="11.5" height="9" fill="none" stroke="#fff" stroke-width="1"/><rect x="68.5" y="937" width="5.5" height="4" fill="#fff"/><rect x="64" y="943" width="2" height="1.5" fill="#fff"/><rect x="64" y="946" width="2" height="1.5" fill="#fff"/><rect x="67" y="943" width="2" height="1.5" fill="#fff"/><rect x="67" y="946" width="2" height="1.5" fill="#fff"/><rect x="70" y="943" width="2" height="1.5" fill="#fff"/><rect x="70" y="946" width="2" height="1.5" fill="#fff"/><rect x="937.5" y="936.5" width="12" height="12" fill="none" stroke="#fff" stroke-width="1"/><path d="M941.5,936.5 L941.5,948.5 M945.5,936.5 L945.5,948.5 M937.5,940.5 L949.5,940.5 M937.5,944.5 L949.5,944.5" stroke="#fff" stroke-width="1"/><rect x="975.5" y="936.5" width="13" height="12" fill="none" stroke="#fff" stroke-width="1"/><rect x="978.5" y="938.5" width="7" height="8" fill="none" stroke="#fff" stroke-width="1"/><path d="M980,940.5 L984,940.5 M980,942.5 L984,942.5 M980,944.5 L984,944.5" stroke="#fff" stroke-width="1"/><rect x="1013.5" y="936.5" width="13" height="12" fill="none" stroke="#fff" stroke-width="1"/><rect x="1016" y="936.5" width="2.5" height="5" fill="#fff"/><rect x="1020" y="936.5" width="2.5" height="5" fill="#fff"/><rect x="1013.5" y="941.5" width="6.5" height="0.1" fill="#fff"/><rect x="1044" y="942" width="6" height="1.6" fill="#fff"/><rect x="1055" y="942.2" width="99" height="1" fill="#fff"/><rect x="1101.5" y="937" width="4.5" height="10.5" fill="#fff"/><path d="M1162,939 L1162,947 M1158,943 L1166,943" stroke="#fff" stroke-width="1.8"/></svg>
<div id="frame"></div>
</body></html>
